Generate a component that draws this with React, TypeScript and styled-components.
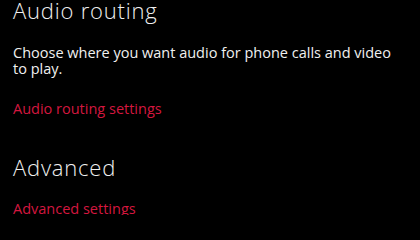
import React from "react";
import styled, { createGlobalStyle } from "styled-components";

const GlobalStyle = createGlobalStyle`
  html, body {
    margin: 0;
    padding: 0;
    background: #000;
  }
  body {
    font-family: "Open Sans", "Noto Sans", sans-serif;
    color: #fff;
  }
`;

const Page = styled.div`
  width: 420px;
  height: 215px;
  overflow: hidden;
  background: #000;
  padding: 0 0 0 13px;
  box-sizing: border-box;
`;

const Section = styled.section<{ $gap?: number }>`
  display: flex;
  flex-direction: column;
  margin-top: ${(p) => p.$gap ?? 0}px;
`;

const Title = styled.h2`
  margin: 0;
  font-size: 22px;
  font-weight: 300;
  letter-spacing: 0.8px;
  line-height: 20px;
  color: #f0f0f0;
`;

const Description = styled.p`
  margin: 25px 0 0;
  font-size: 14.5px;
  line-height: 16px;
  color: #f0f0f0;
  width: 395px;
`;

const Link = styled.a<{ $top: number }>`
  display: block;
  margin-top: ${(p) => p.$top}px;
  font-size: 14.5px;
  line-height: 16px;
  color: #d4173f;
  text-decoration: none;
`;

export default function App() {
  return (
    <>
      <GlobalStyle />
      <Page>
        <Section>
          <Title>Audio routing</Title>
          <Description>
            Choose where you want audio for phone calls and video to play.
          </Description>
          <Link $top={24}>Audio routing settings</Link>
        </Section>
        <Section $gap={40}>
          <Title>Advanced</Title>
          <Link $top={24}>Advanced settings</Link>
        </Section>
      </Page>
    </>
  );
}
